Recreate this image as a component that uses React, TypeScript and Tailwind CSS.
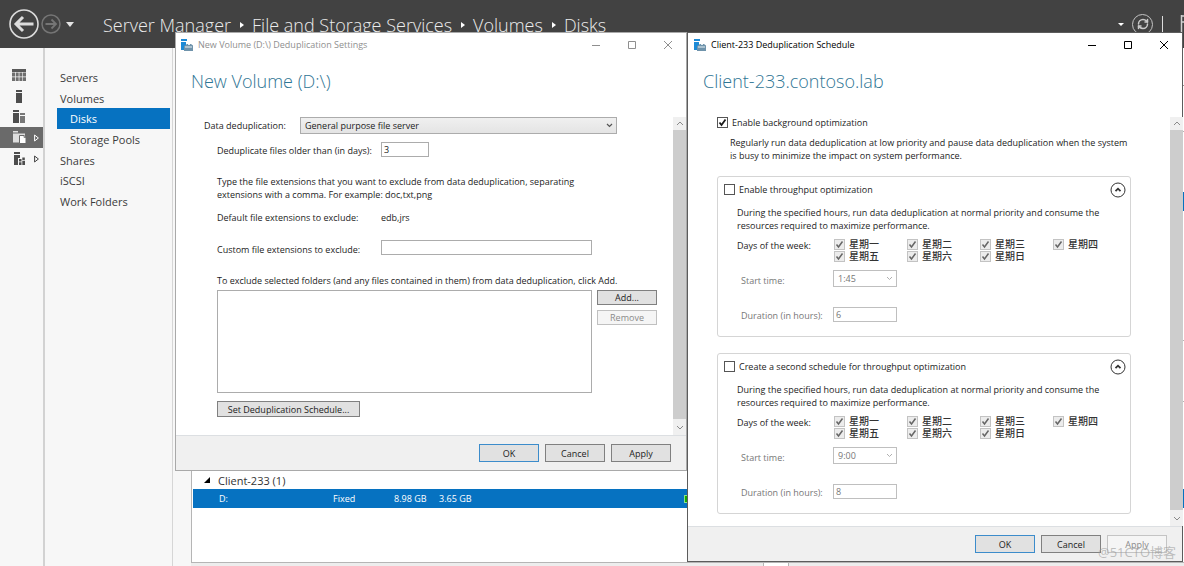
import { RefreshCw } from "lucide-react";
import type { ReactNode } from "react";

const weekDays = ["星期一", "星期二", "星期三", "星期四", "星期五", "星期六", "星期日"];

const navItems = [
    { name: "Servers" },
    { name: "Volumes" },
    { name: "Disks", nested: true, active: true },
    { name: "Storage Pools", nested: true },
    { name: "Shares" },
    { name: "iSCSI" },
    { name: "Work Folders" },
];

function Crumb({ name }: { name: string }) {
    return <a href="#" className="whitespace-nowrap text-lg/6 font-light">{name}</a>
}

function CrumbArrow() {
    return (
        <svg viewBox="0 0 4 6" className="ml-[9px] mr-2 h-[6px] w-1 shrink-0 fill-white">
            <path d="M0 0 4 3 0 6z" />
        </svg>
    )
}

function TopBar() {
    return (
        <header className="flex h-12 items-center bg-[#424242] pl-[9px] text-[#ececec]">
            <button type="button" aria-label="Back" className="size-[30px] shrink-0">
                <svg viewBox="0 0 30 30" fill="none" stroke="#dcdcdc" className="size-full">
                    <circle cx="15" cy="15" r="14" strokeWidth="1.6" />
                    <path d="M24.500 15H8M14 8l-7 7 7 7" strokeWidth="3" />
                </svg>
            </button>
            <button type="button" aria-label="Forward" className="ml-[2px] size-5 shrink-0">
                <svg viewBox="0 0 20 20" fill="none" stroke="#757575" className="size-full">
                    <circle cx="10" cy="10" r="9" strokeWidth="1.500" />
                    <path d="M4.500 10H15M10.500 5.500 15 10l-4.500 4.500" strokeWidth="1.800" />
                </svg>
            </button>
            <button type="button" aria-label="History" className="ml-[5px]">
                <svg viewBox="0 0 8 5" className="h-[5px] w-2 fill-[#e4e4e4]"><path d="M0 0h8L4 5z" /></svg>
            </button>
            <nav aria-label="Breadcrumb" className="ml-[29px] flex items-center pt-[2px]">
                <Crumb name="Server Manager" />
                <CrumbArrow />
                <Crumb name="File and Storage Services" />
                <CrumbArrow />
                <Crumb name="Volumes" />
                <CrumbArrow />
                <Crumb name="Disks" />
            </nav>
            <div className="ml-auto flex items-center">
                <svg viewBox="0 0 6 3" className="mr-2 h-[3px] w-[6px] fill-white"><path d="M0 0h6L3 3z" /></svg>
                <button type="button" aria-label="Refresh" className="flex size-[21px] items-center justify-center rounded-full border border-[#c4c4c4]">
                    <RefreshCw className="size-3 text-[#c9c9c9]" strokeWidth={3} />
                </button>
                <span className="mx-[9px] h-4 w-px bg-[#dcdcdc]" />
                <svg viewBox="0 0 12 20" className="h-5 w-3">
                    <path d="M9.500 1v19M10 2h2M10 8h2" stroke="#cfcfcf" strokeWidth="1.500" fill="none" />
                </svg>
            </div>
        </header>
    )
}

function RailArrow({ light }: { light?: boolean }) {
    return (
        <svg viewBox="0 0 5 8" fill="none" className={light ? "h-2 w-[5px] stroke-white" : "h-2 w-[5px] stroke-[#444]"}>
            <path d="M.6 1v6L4.400 4z" />
        </svg>
    )
}

function Rail() {
    return (
        <nav aria-label="Views" className="w-[45px] shrink-0 border-r-2 border-[#d2d2d2] pt-[17px]">
            <div className="grid h-[104px] grid-rows-5 *:flex *:items-center *:pl-3">
                <a href="#" aria-label="Dashboard">
                    <svg viewBox="0 0 14 13" className="h-[13px] w-[14px]">
                        <path d="M0 0h14v3H0z" fill="#595959" />
                        <path d="M0 3.500h3v4H0zM3.700 3.500h3v4h-3zM7.400 3.500h3v4h-3zM11 3.500h3v4h-3zM0 8.200h3V12H0zM3.700 8.200h3V12h-3zM7.400 8.200h3V12h-3zM11 8.200h3V12h-3z" fill="#6f6f6f" />
                    </svg>
                </a>
                <a href="#" aria-label="Local Server">
                    <svg viewBox="0 0 14 13" className="h-[13px] w-[14px] fill-[#4d4d4d]">
                        <path d="M4 0h6v2H4zM4 3h6v10H4z" />
                    </svg>
                </a>
                <a href="#" aria-label="All Servers">
                    <svg viewBox="0 0 14 13" className="h-[13px] w-[14px]">
                        <path d="M1 0h6v2H1zM1 3h6v10H1z" fill="#4d4d4d" />
                        <path d="M8 3h5v2H8zM8 6h5v7H8z" fill="#777" />
                    </svg>
                </a>
                <a href="#" aria-label="File and Storage Services" className="gap-[7px] bg-[#6a6a6a]">
                    <svg viewBox="0 0 15 13" className="h-[13px] w-[15px]">
                        <path d="M1 0h5v1.500H1zM1 2.500h12v9H1z" fill="#dedede" />
                        <path d="M7.500 4.500H12l2 2v6H7.500z" fill="#fff" stroke="#6a6a6a" />
                        <path d="M12 4v2.500h2.500" fill="none" stroke="#6a6a6a" strokeWidth=".7" />
                    </svg>
                    <RailArrow light />
                </a>
                <a href="#" aria-label="Roles" className="gap-[7px]">
                    <svg viewBox="0 0 15 13" className="h-[13px] w-[15px] fill-[#4d4d4d]">
                        <path d="M2 0h6v2H2zM2 3h6v3H6v7H2zM7 7h2.500v2.500H7zM10.300 5.500h2.500V8h-2.500zM7 10.300h2.500V13H7zM10.300 8.800H13V13h-2.700z" />
                    </svg>
                    <RailArrow />
                </a>
            </div>
        </nav>
    )
}

function SideNav() {
    return (
        <nav aria-label="File services" className="w-[128px] shrink-0 border-r border-[#d6d6d6] pt-[19px] text-[11px]">
            <ul className="ml-3 mr-[2px] grid h-[145px] grid-rows-7 text-[#3b3b3b]">
                {navItems.map((item) => {
                    if (item.active) {
                        return <li key={item.name} className="flex items-center bg-[#0672c1] pl-[13px] text-white"><a href="#">{item.name}</a></li>
                    }
                    return <li key={item.name} className={item.nested ? "flex items-center pl-[13px]" : "flex items-center pl-[3px]"}><a href="#">{item.name}</a></li>
                })}
            </ul>
        </nav>
    )
}

function VolumePanel() {
    return (
        <main className="flex min-w-0 flex-1 flex-col pl-[18px]">
            <div className="flex flex-1 flex-col border-b border-l border-[#b5b5b5] bg-white">
                <div className="h-[38px] border-b border-[#999]" />
                <div className="h-[46px] border-b border-[#b5b5b5]" />
                <div className="h-[60px]" />
                <div className="h-[19px] bg-[#0672c1]" />
                <div className="h-[130px] border-b border-[#b5b5b5]" />
                <div className="h-[61px] border-b border-[#b5b5b5]" />
                <div className="mt-[69px] flex h-[18px] items-center gap-2 pl-3 text-[11px] text-[#333]">
                    <svg viewBox="0 0 6 6" className="size-[6px] fill-black"><path d="M6 0v6H0z" /></svg>
                    Client-233 (1)
                </div>
                <table className="ml-px table-fixed bg-[#0672c1] text-left text-[9px] text-white">
                    <tbody>
                        <tr className="h-[19px]">
                            <td className="w-[140px] pl-[26px]">D:</td>
                            <td className="w-[61px]">Fixed</td>
                            <td className="w-[45px]">8.98 GB</td>
                            <td className="w-[245px]">3.65 GB</td>
                            <td><div className="h-2 w-20 border border-[#8be08b] bg-[#14a800]" /></td>
                        </tr>
                    </tbody>
                </table>
            </div>
            <div className="flex h-[3px] bg-[#ededed] pl-[572px]">
                <div className="w-[26px] border-x border-[#b5b5b5] bg-white" />
            </div>
        </main>
    )
}

function TitleBar({ title, active }: { title: string, active?: boolean }) {
    return (
        <div className={active ? "flex h-[23px] items-center pl-[6px] text-black" : "flex h-[23px] items-center pl-[5px] text-[#8f8f8f]"}>
            <svg viewBox="0 0 12 12" className="size-3 shrink-0">
                <path d="M0 0h6v2H0zM0 3h5v8H0z" fill="#1c8ad6" />
                <path d="M4 6.500 6 5h4l2 1.500V12H3V7z" fill="#6f93ab" />
                <path d="M4 8h7M7 5.500h2" stroke="#e7f0f5" />
            </svg>
            <h1 className="ml-[5px] text-[9px]">{title}</h1>
            <div className="ml-auto flex items-center gap-[26px] pr-[13px] *:size-[10px]">
                <button type="button" aria-label="Minimize">
                    <svg viewBox="0 0 10 10" stroke="currentColor"><path d="M1 5.500h8" /></svg>
                </button>
                <button type="button" aria-label="Maximize">
                    <svg viewBox="0 0 10 10" fill="none" stroke="currentColor"><path d="M1.500 1.500h7v7h-7z" /></svg>
                </button>
                <button type="button" aria-label="Close">
                    <svg viewBox="0 0 10 10" stroke="currentColor"><path d="m1 1 8 8M9 1 1 9" /></svg>
                </button>
            </div>
        </div>
    )
}

function ScrollBar() {
    return (
        <div className="flex w-[13px] shrink-0 flex-col bg-[#f0f0f0]">
            <svg viewBox="0 0 13 13" className="h-[13px] fill-none stroke-[#8a8a8a]"><path d="m4 8 3-3 3 3" /></svg>
            <div className="flex-1 bg-[#cdcdcd]" />
            <svg viewBox="0 0 13 16" className="h-4 fill-none stroke-[#8a8a8a]"><path d="m4 7 3 3 3-3" /></svg>
        </div>
    )
}

function Chevron({ faded }: { faded?: boolean }) {
    return (
        <svg viewBox="0 0 7 5" className={faded ? "pointer-events-none col-start-1 row-start-1 mr-1 h-[5px] w-[7px] justify-self-end fill-none stroke-[#b0b0b0]" : "pointer-events-none col-start-1 row-start-1 mr-1 h-[5px] w-[7px] justify-self-end fill-none stroke-[#555] stroke-[1.2]"}>
            <path d="m1 1 2.500 2.500L6 1" />
        </svg>
    )
}

function Check({ label, checked, disabled, cjk }: { label: string, checked?: boolean, disabled?: boolean, cjk?: boolean }) {
    return (
        <label className={cjk ? "flex h-3 items-center gap-1 text-[10px]/3 font-medium text-[#333]" : "flex h-[11px] items-center gap-1"}>
            <span className="grid shrink-0 place-items-center">
                <input type="checkbox" defaultChecked={checked} disabled={disabled} className="peer col-start-1 row-start-1 size-[11px] appearance-none border border-[#555] bg-white disabled:border-[#c3c3c3] disabled:bg-[#ececec]" />
                <svg viewBox="0 0 9 9" className="pointer-events-none invisible col-start-1 row-start-1 size-[9px] fill-none stroke-[#1a1a1a] stroke-[1.8] peer-checked:visible peer-disabled:stroke-[#666] peer-disabled:stroke-[1.5]">
                    <path d="M1.500 4.500 3.500 7 7.500 1.500" />
                </svg>
            </span>
            {label}
        </label>
    )
}

function Footer({ applyDisabled }: { applyDisabled?: boolean }) {
    return (
        <div className="flex h-[35px] items-center justify-end gap-[6px] border-t border-[#dcdfe2] bg-[#f0f0f0] pr-[15px] *:h-[18px] *:w-[60px] *:border">
            <button type="button" className="border-[#3c8ccb] bg-[#e1e1e1]">OK</button>
            <button type="button" className="border-[#808080] bg-[#e1e1e1]">Cancel</button>
            <button type="button" disabled={applyDisabled} className="border-[#808080] bg-[#e1e1e1] disabled:border-[#c4c4c4] disabled:bg-[#f5f5f5] disabled:text-[#8a8a8a]">Apply</button>
        </div>
    )
}

function Heading({ children }: { children: ReactNode }) {
    return <h2 className="flex h-[61px] items-center pb-[11px] pl-[15px] text-lg font-light text-[#2f7594]">{children}</h2>
}

function DedupSettings() {
    return (
        <section className="absolute left-[175px] top-8 w-[512px] border border-[#a9a9a9] bg-white">
            <TitleBar title="New Volume (D:\) Deduplication Settings" />
            <Heading>New Volume (D:\)</Heading>
            <div className="flex">
                <div className="flex-1 pb-[18px] pl-7 pr-4">
                    <div className="flex items-center">
                        <label htmlFor="mode" className="w-24">Data deduplication:</label>
                        <div className="grid w-[317px] items-center">
                            <select id="mode" className="col-start-1 row-start-1 h-[17px] appearance-none border border-[#acacac] bg-linear-to-b from-[#f0f0f0] to-[#e4e4e4] pl-1">
                                <option>General purpose file server</option>
                            </select>
                            <Chevron />
                        </div>
                    </div>
                    <div className="pl-[13px]">
                        <div className="mt-[7px] flex items-center">
                            <label htmlFor="age" className="w-[164px] pt-[3px]">Deduplicate files older than (in days):</label>
                            <input id="age" defaultValue="3" className="h-[15px] w-12 border border-[#acacac] pl-[2px]" />
                        </div>
                        <p className="mt-[18px]">Type the file extensions that you want to exclude from data deduplication, separating<br />extensions with a comma. For example: doc,txt,png</p>
                        <div className="mt-[10px] flex">
                            <p className="w-[164px]">Default file extensions to exclude:</p>
                            <p>edb,jrs</p>
                        </div>
                        <div className="mt-[15px] flex items-center">
                            <label htmlFor="custom" className="w-[164px] pt-1">Custom file extensions to exclude:</label>
                            <input id="custom" className="h-[15px] w-[211px] border border-[#acacac] pl-[2px]" />
                        </div>
                        <p className="mt-[18px]">To exclude selected folders (and any files contained in them) from data deduplication, click Add.</p>
                        <div className="mt-[3px] flex gap-[5px]">
                            <div role="listbox" aria-label="Excluded folders" className="h-[103px] w-[375px] border border-[#acacac]" />
                            <div className="flex w-[60px] flex-col gap-[5px]">
                                <button type="button" className="h-[15px] border border-[#808080] bg-[#e1e1e1] leading-3">Add...</button>
                                <button type="button" disabled className="h-[15px] border border-[#c0c0c0] bg-[#f5f5f5] leading-3 text-[#8a8a8a]">Remove</button>
                            </div>
                        </div>
                        <button type="button" className="mt-2 block h-4 w-[143px] border border-[#808080] bg-[#e1e1e1]">Set Deduplication Schedule...</button>
                    </div>
                </div>
                <ScrollBar />
            </div>
            <Footer />
        </section>
    )
}

function ScheduleGroup({ id, title, start, hours }: { id: string, title: string, start: string, hours: string }) {
    return (
        <div className="rounded-[3px] border border-[#d5d5d5] pb-[14px] pl-[6px] pr-1">
            <div className="flex h-[25px] items-center justify-between">
                <Check label={title} />
                <button type="button" aria-label="Collapse" className="size-4">
                    <svg viewBox="0 0 16 16" fill="none" stroke="#333" className="size-full">
                        <circle cx="8" cy="8" r="7" />
                        <path d="M5.500 9.200 8 6.700l2.500 2.500" strokeWidth="1.800" />
                    </svg>
                </button>
            </div>
            <div className="pl-[13px]">
                <p className="mt-1">During the specified hours, run data deduplication at normal priority and consume the<br />resources required to maximize performance.</p>
                <div className="mt-[6px] flex">
                    <p className="w-[97px] pt-px">Days of the week:</p>
                    <div className="grid w-[292px] grid-cols-4">
                        {weekDays.map((day) => <Check key={day} label={day} checked disabled cjk />)}
                    </div>
                </div>
                <div className="pl-1 text-[#777]">
                    <div className="mt-2 flex items-center">
                        <label htmlFor={`${id}-start`} className="w-[92px] pt-1">Start time:</label>
                        <div className="grid w-16 items-center">
                            <select id={`${id}-start`} disabled className="col-start-1 row-start-1 h-[17px] appearance-none border border-[#bfbfbf] bg-white pl-1">
                                <option>{start}</option>
                            </select>
                            <Chevron faded />
                        </div>
                    </div>
                    <div className="mt-[19px] flex items-center">
                        <label htmlFor={`${id}-hours`} className="w-[92px] pt-[3px]">Duration (in hours):</label>
                        <input id={`${id}-hours`} disabled defaultValue={hours} className="h-[15px] w-16 border border-[#bfbfbf] pl-[2px]" />
                    </div>
                </div>
            </div>
        </div>
    )
}

function DedupSchedule() {
    return (
        <section className="absolute right-px top-8 w-[496px] border border-[#5c5c5c] bg-white">
            <TitleBar title="Client-233 Deduplication Schedule" active />
            <Heading>Client-233.contoso.lab</Heading>
            <div className="flex">
                <div className="flex-1 pb-3 pl-[29px] pr-[39px]">
                    <Check label="Enable background optimization" checked />
                    <p className="mt-2 pl-[13px]">Regularly run data deduplication at low priority and pause data deduplication when the system<br />is busy to minimize the impact on system performance.</p>
                    <div className="mt-[14px] flex flex-col gap-4">
                        <ScheduleGroup id="first" title="Enable throughput optimization" start="1:45" hours="6" />
                        <ScheduleGroup id="second" title="Create a second schedule for throughput optimization" start="9:00" hours="8" />
                    </div>
                </div>
                <ScrollBar />
            </div>
            <Footer applyDisabled />
        </section>
    )
}

export default function App() {
    return (
        <div className="relative flex min-h-screen flex-col overflow-hidden bg-[#f7f7f7] font-['Open_Sans','Noto_Sans_CJK_SC',sans-serif] text-[9px]/[13px] text-[#1c1c1c]">
            <TopBar />
            <div className="flex flex-1">
                <Rail />
                <SideNav />
                <VolumePanel />
            </div>
            <DedupSettings />
            <DedupSchedule />
            <p className="pointer-events-none absolute bottom-1 right-2 text-[13px]/5 text-[#999]/60">@51CTO博客</p>
        </div>
    )
}
